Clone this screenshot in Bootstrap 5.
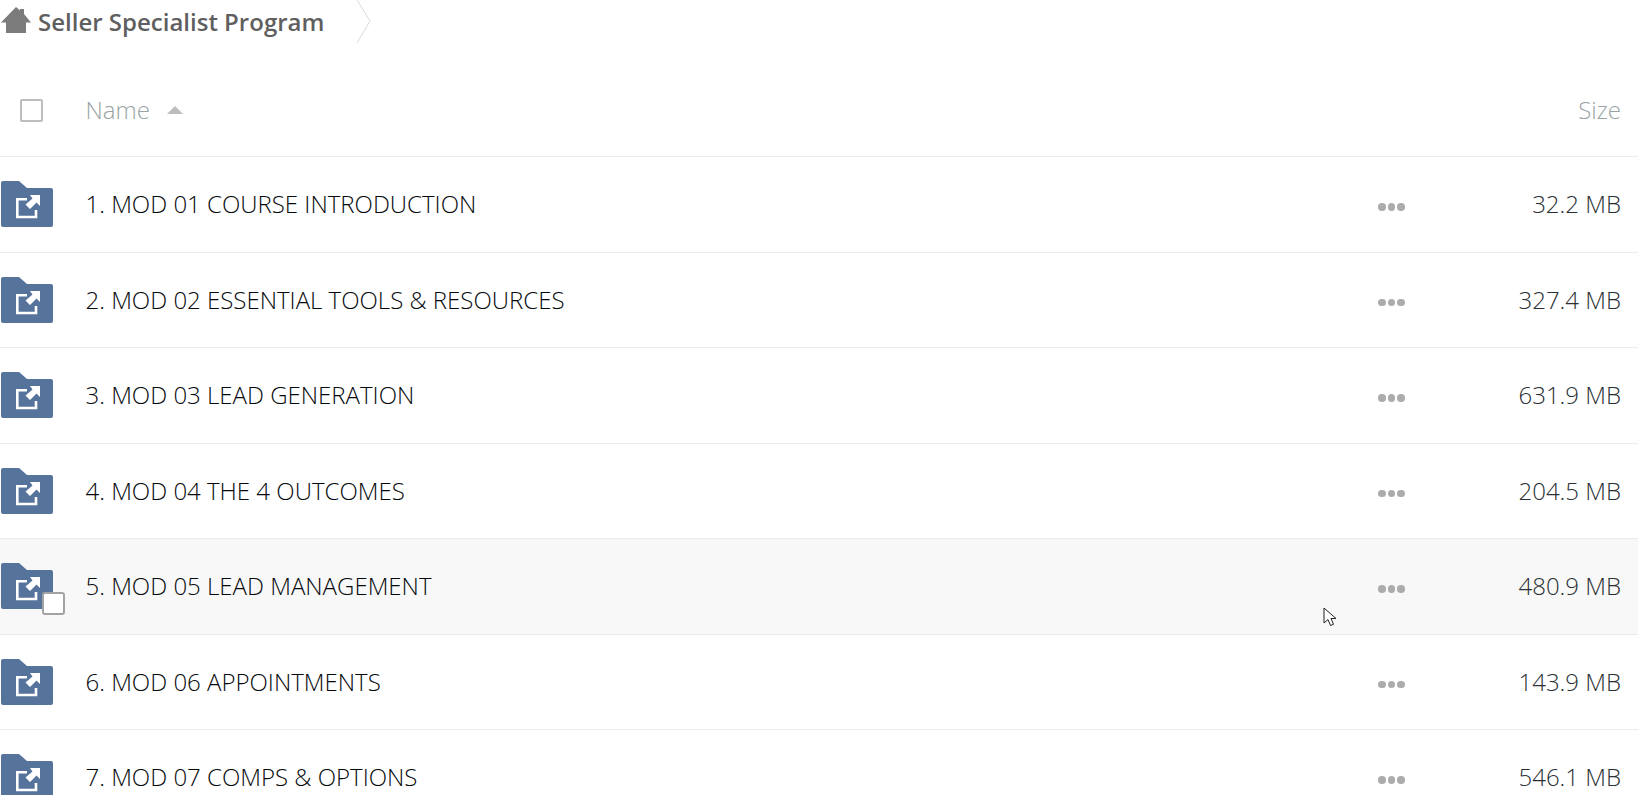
<!DOCTYPE html>
<html lang="en">
<head>
  <meta charset="UTF-8">
  <title>Seller Specialist Program</title>
  <link href="https://cdn.jsdelivr.net/npm/bootstrap@5.3.0/dist/css/bootstrap.min.css" rel="stylesheet">
  <style>
    html, body { height: 795px; overflow: hidden; }
    body { font-family: "Open Sans", "Liberation Sans", sans-serif; background: #fff; color: #06090c; position: relative; }
    .crumb-bar { height: 44px; }
    .crumb-title { font-size: 24px; font-weight: 600; color: #5f5f5f; margin-left: 7px; }
    .crumb-home { width: 30px; height: 30px; margin-left: 1px; }
    .crumb-sep { width: 16px; height: 44px; margin-left: 32px; }
    .head-row { height: 113px; padding-top: 19px; border-bottom: 1px solid #ebebeb; color: #98a4a4; font-size: 24px; font-weight: 300; }
    .tick-cell { width: 85.5px; }
    .tick-box { display: block; width: 23px; height: 23px; margin: 2px 0 0 20px; background: #fff; border: 2px solid #bdbdbd; border-radius: 2px; }
    .sort-up { width: 0; height: 0; margin-left: 17px; border-left: 8px solid transparent; border-right: 8px solid transparent; border-bottom: 8px solid #bdbdbd; }
    .file-row { height: 95.5px; border-bottom: 1px solid #ebebeb; font-size: 24px; font-weight: 300; }
    .file-row.is-hover { background: #f8f8f8; }
    .folder-cell { width: 85.5px; position: relative; }
    .folder-ico { display: block; width: 54px; height: 46px; }
    .hover-box { position: absolute; left: 42px; top: 50%; margin-top: 6px; width: 23px; height: 23px; background: #fff; border: 2px solid #a3a3a3; border-radius: 3px; }
    .more-dots { width: 27px; gap: 2px; margin-right: 113px; margin-top: 5px; }
    .more-dots i { display: block; width: 7.5px; height: 7.5px; border-radius: 50%; background: #acacac; }
    .size-cell { width: 120px; text-align: right; padding-right: 17px; color: #2a2f34; }
    .size-head { width: 120px; text-align: right; padding-right: 17px; }
    .mouse-ptr { position: absolute; left: 1323px; top: 607px; width: 16px; height: 22px; }
  </style>
</head>
<body>
  <svg width="0" height="0" class="position-absolute">
    <symbol id="shared-folder" viewBox="0 0 54 46">
      <path d="M1 2a2 2 0 0 1 2-2h16l8 7h24a2 2 0 0 1 2 2v35a2 2 0 0 1-2 2H3a2 2 0 0 1-2-2z" fill="#56739b"/>
      <path d="M27 18.300H17.300V36H36V29" fill="none" stroke="#fff" stroke-width="2.600"/>
      <path d="M30 14H40V25L36.500 21.500 30 28 25.500 23.500 32.500 17.500z" fill="#fff"/>
    </symbol>
  </svg>

  <!-- breadcrumb -->
  <div class="crumb-bar d-flex align-items-center">
    <svg class="crumb-home" viewBox="0 0 30 30">
      <path d="M15 0l4 3.500V2h4v5l7 8.600h-5V26H5V15.600H0z" fill="#7b7b7b"/>
    </svg>
    <span class="crumb-title">Seller Specialist Program</span>
    <svg class="crumb-sep" viewBox="0 0 16 44">
      <path d="M1 0l13 21L1 43" fill="none" stroke="#d9d9d9"/>
    </svg>
  </div>

  <!-- header -->
  <div class="head-row d-flex align-items-center">
    <div class="tick-cell"><span class="tick-box"></span></div>
    <div class="flex-grow-1 d-flex align-items-center">Name <span class="sort-up"></span></div>
    <div class="size-head">Size</div>
  </div>

  <div id="file-list"></div>

  <svg class="mouse-ptr" viewBox="0 0 16 22">
    <path d="M1 1v15l4-3.500 2.500 6 3-1.200-2.500-5.800h5z" fill="#fff" stroke="#222" stroke-width="1"/>
  </svg>

  <script src="https://cdn.jsdelivr.net/npm/bootstrap@5.3.0/dist/js/bootstrap.bundle.min.js"></script>
  <script>
    const files = [
      ['1. MOD 01 COURSE INTRODUCTION', '32.2 MB'],
      ['2. MOD 02 ESSENTIAL TOOLS & RESOURCES', '327.4 MB'],
      ['3. MOD 03 LEAD GENERATION', '631.9 MB'],
      ['4. MOD 04 THE 4 OUTCOMES', '204.5 MB'],
      ['5. MOD 05 LEAD MANAGEMENT', '480.9 MB'],
      ['6. MOD 06 APPOINTMENTS', '143.9 MB'],
      ['7. MOD 07 COMPS & OPTIONS', '546.1 MB']
    ];
    const list = document.getElementById('file-list');
    files.forEach((f, i) => {
      const row = document.createElement('div');
      row.className = 'file-row d-flex align-items-center' + (i === 4 ? ' is-hover' : '');
      row.innerHTML = `
        <div class="folder-cell">
          <svg class="folder-ico"><use href="#shared-folder"/></svg>
          ${i === 4 ? '<span class="hover-box"></span>' : ''}
        </div>
        <div class="flex-grow-1 file-name"></div>
        <div class="more-dots d-flex"><i></i><i></i><i></i></div>
        <div class="size-cell">${f[1]}</div>
      `;
      row.querySelector('.file-name').textContent = f[0];
      list.appendChild(row);
    });
  </script>
</body>
</html>
